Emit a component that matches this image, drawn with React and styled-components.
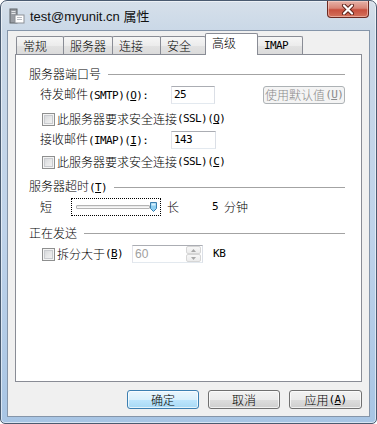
import React from 'react';
import styled, { createGlobalStyle } from 'styled-components';

const GlobalStyle = createGlobalStyle`
  html, body { margin: 0; padding: 0; background: #ffffff; }
  body {
    font-family: "Noto Sans CJK SC", sans-serif;
    font-size: 12px;
    font-weight: 300;
    color: #000;
  }
`;

const Window = styled.div`
  box-sizing: border-box;
  width: 377px;
  height: 424px;
  display: flex;
  flex-direction: column;
  padding: 0 6px 6px;
  border: 1px solid #4a5b70;
  border-radius: 7px 7px 5px 5px;
  background: linear-gradient(180deg, #d6e0ea 0, #cad8e7 30px, #bfd3ea 55%, #a8c5e4 100%);
  box-shadow: inset 0 0 0 1px rgba(255, 255, 255, 0.55);
`;

const TitleBar = styled.div`
  height: 29px;
  display: flex;
  align-items: center;
`;

const TitleIcon = styled.svg`
  width: 16px;
  height: 16px;
  margin-left: 2px;
  flex: none;
`;

const TitleText = styled.div`
  margin-left: 5px;
  font-family: "Liberation Sans", "Noto Sans CJK SC", sans-serif;
  font-size: 13px;
  font-weight: 400;
  color: #111;
  white-space: nowrap;
`;

const CloseButton = styled.div`
  align-self: flex-start;
  margin-left: auto;
  margin-right: 1px;
  width: 42px;
  height: 17px;
  box-sizing: border-box;
  border: 1px solid #6b2a22;
  border-top: none;
  border-radius: 0 0 4px 4px;
  background: linear-gradient(180deg, #e6b2a8 0%, #d98677 45%, #c8503e 55%, #d4725c 100%);
  box-shadow: inset 0 0 0 1px rgba(255, 220, 210, 0.5);
  display: flex;
  align-items: center;
  justify-content: center;
`;

const Client = styled.div`
  flex: 1;
  display: flex;
  flex-direction: column;
  border: 1px solid #8595a9;
  background: #f0f0f0;
  padding: 0 7px 7px;
`;

const TabRow = styled.div`
  height: 23px;
  display: flex;
  align-items: flex-end;
  padding-left: 2px;
`;

const Tab = styled.div`
  box-sizing: border-box;
  width: ${p => p.w}px;
  height: ${p => (p.active ? 22 : 18)}px;
  margin-left: -1px;
  margin-bottom: ${p => (p.active ? -1 : 0)}px;
  padding: 0 0 ${p => (p.active ? 3 : 0)}px 6px;
  position: relative;
  z-index: ${p => (p.active ? 1 : 0)};
  border: 1px solid #898c95;
  border-bottom: none;
  border-radius: 2px 2px 0 0;
  background: ${p => (p.active ? '#ffffff' : 'linear-gradient(180deg, #f6f6f6 0%, #ececec 50%, #e2e2e2 51%, #dbdbdb 100%)')};
  display: flex;
  align-items: center;
  line-height: 14px;
`;

const Panel = styled.div`
  box-sizing: border-box;
  height: 328px;
  border: 1px solid #898c95;
  background: #ffffff;
  padding: 0 16px 0 13px;
  display: flex;
  flex-direction: column;
`;

const Ascii = styled.span`
  font-family: "DejaVu Sans Mono", monospace;
  font-weight: 400;
  font-size: 11px;
  letter-spacing: -0.6px;
`;

const Heading = styled.div`
  height: 16px;
  margin-top: ${p => p.mt}px;
  display: flex;
  align-items: center;
  gap: 7px;
  line-height: 16px;
  white-space: nowrap;
  &::after {
    content: '';
    flex: 1;
    border-top: 1px solid #a3a3a3;
  }
`;

const Row = styled.div`
  height: ${p => p.h}px;
  margin-top: ${p => p.mt}px;
  padding-left: ${p => p.indent}px;
  display: flex;
  align-items: center;
  white-space: nowrap;
  line-height: 14px;
`;

const FieldLabel = styled.span`
  width: ${p => p.w}px;
  flex: none;
`;

const TextBox = styled.div`
  box-sizing: border-box;
  width: ${p => p.w}px;
  height: 18px;
  padding-left: 2px;
  border: 1px solid;
  border-color: #abadb3 #dbdfe6 #e3e9ef #e2e3ea;
  background: #fff;
  display: flex;
  align-items: center;
  margin-left: ${p => p.ml || 0}px;
  color: ${p => (p.disabled ? '#a0a0a0' : '#000')};
`;

const SpinText = styled.span`
  flex: 1;
  font-family: "Liberation Sans", sans-serif;
  font-weight: 400;
  font-size: 12px;
`;

const SpinButtons = styled.div`
  width: 15px;
  height: 16px;
  margin-right: 1px;
  display: flex;
  flex-direction: column;
`;

const SpinHalf = styled.div`
  flex: 1;
  box-sizing: border-box;
  border: 1px solid #d6d6d6;
  border-radius: 2px;
  background: linear-gradient(180deg, #f7f7f7, #ececec);
  display: flex;
  align-items: center;
  justify-content: center;
`;

const DefaultsButton = styled.div`
  box-sizing: border-box;
  width: 83px;
  height: 18px;
  margin-left: 48px;
  border: 1px solid #adb2b5;
  border-radius: 3px;
  background: #f4f4f4;
  color: #8a8a8a;
  display: flex;
  align-items: center;
  justify-content: center;
`;

const CheckBox = styled.span`
  box-sizing: border-box;
  width: 13px;
  height: 13px;
  flex: none;
  margin-right: 2px;
  border: 1px solid #8e8f8f;
  background: linear-gradient(135deg, #cfd1d4 0%, #e6e7e8 50%, #f6f6f6 100%);
  box-shadow: inset 0 0 0 1px #f4f4f4, inset 0 0 0 2px #c9cbcf;
`;

const SliderBox = styled.div`
  box-sizing: border-box;
  width: 90px;
  height: 18px;
  margin-left: 19px;
  border: 1px dotted #000;
  display: flex;
  align-items: center;
  padding-left: 4px;
`;

const Track = styled.div`
  box-sizing: border-box;
  width: 74px;
  height: 4px;
  border: 1px solid #b4b4b4;
  border-radius: 1px;
  background: linear-gradient(180deg, #e2e2e2, #ffffff);
`;

const Thumb = styled.svg`
  width: 7px;
  height: 10px;
  flex: none;
`;

const Gap = styled.span`
  display: inline-block;
  width: ${p => p.w}px;
  flex: none;
`;

const ButtonRow = styled.div`
  margin-top: 8px;
  display: flex;
  justify-content: flex-end;
  gap: 9px;
`;

const DialogButton = styled.div`
  box-sizing: border-box;
  width: ${p => p.w}px;
  height: 19px;
  border: 1px solid ${p => (p.primary ? '#3c7fb1' : '#707070')};
  border-radius: 3px;
  background: ${p =>
    p.primary
      ? 'linear-gradient(180deg, #eaf6fd 0%, #d9f0fc 50%, #bee6fd 51%, #a7d9f5 100%)'
      : 'linear-gradient(180deg, #f2f2f2 0%, #ebebeb 50%, #dddddd 51%, #cfcfcf 100%)'};
  box-shadow: inset 0 0 0 1px rgba(255, 255, 255, 0.7);
  display: flex;
  align-items: center;
  justify-content: center;
  line-height: 14px;
`;

const tabs = [
  { key: 'general', label: '常规', w: 48 },
  { key: 'servers', label: '服务器', w: 50 },
  { key: 'connect', label: '连接', w: 49 },
  { key: 'security', label: '安全', w: 46 },
  { key: 'advanced', label: '高级', w: 53, active: true },
  { key: 'imap', label: <Ascii>IMAP</Ascii>, w: 46 },
];

function Arrow({ up }) {
  return (
    <svg width="5" height="3" viewBox="0 0 5 3">
      <path d={up ? 'M0 3 L2.5 0 L5 3 Z' : 'M0 0 L2.5 3 L5 0 Z'} fill="#a8a8a8" />
    </svg>
  );
}

export default function App() {
  return (
    <>
      <GlobalStyle />
      <Window>
        <TitleBar>
          <TitleIcon viewBox="0 0 16 16">
            <rect x="1" y="1" width="7" height="14" fill="#9a9ea4" stroke="#5f6469" strokeWidth="1" />
            <rect x="2.5" y="3" width="4" height="1" fill="#e4e6e8" />
            <rect x="2.5" y="5" width="4" height="1" fill="#e4e6e8" />
            <rect x="6" y="7" width="9" height="8" fill="#ffffff" stroke="#8b8f95" strokeWidth="1" />
            <rect x="8" y="9" width="5" height="1" fill="#b8bcc2" />
            <rect x="8" y="11" width="5" height="1" fill="#b8bcc2" />
          </TitleIcon>
          <TitleText>test@myunit.cn 属性</TitleText>
          <CloseButton>
            <svg width="14" height="11" viewBox="0 0 14 11">
              <path d="M3 1.5 L11 9.5 M11 1.5 L3 9.5" stroke="#5b2018" strokeWidth="4" strokeLinecap="round" />
              <path d="M3 1.5 L11 9.5 M11 1.5 L3 9.5" stroke="#ffffff" strokeWidth="2.2" strokeLinecap="round" />
            </svg>
          </CloseButton>
        </TitleBar>
        <Client>
          <TabRow>
            {tabs.map(t => (
              <Tab key={t.key} w={t.w} active={t.active}>
                {t.label}
              </Tab>
            ))}
          </TabRow>
          <Panel>
            <Heading mt={11}>服务器端口号</Heading>
            <Row h={18} mt={4} indent={11}>
              <FieldLabel w={131}>
                待发邮件<Ascii>(SMTP)(<u>O</u>):</Ascii>
              </FieldLabel>
              <TextBox w={45}>
                <Ascii>25</Ascii>
              </TextBox>
              <DefaultsButton>
                使用默认值<Ascii>(<u>U</u>)</Ascii>
              </DefaultsButton>
            </Row>
            <Row h={14} mt={8} indent={13}>
              <CheckBox />
              此服务器要求安全连接<Ascii>(SSL)(<u>Q</u>)</Ascii>
            </Row>
            <Row h={18} mt={5} indent={11}>
              <FieldLabel w={131}>
                接收邮件<Ascii>(IMAP)(<u>I</u>):</Ascii>
              </FieldLabel>
              <TextBox w={45}>
                <Ascii>143</Ascii>
              </TextBox>
            </Row>
            <Row h={14} mt={6} indent={13}>
              <CheckBox />
              此服务器要求安全连接<Ascii>(SSL)(<u>C</u>)</Ascii>
            </Row>

            <Heading mt={10}>
              <span>
                服务器超时<Ascii>(<u>T</u>)</Ascii>
              </span>
            </Heading>
            <Row h={18} mt={3} indent={11}>
              短
              <SliderBox>
                <Track />
                <Thumb viewBox="0 0 7 10">
                  <path
                    d="M0.5 0.5 H6.5 V6.5 L3.5 9.5 L0.5 6.5 Z"
                    fill="#8fd0f2"
                    stroke="#3b7fae"
                    strokeWidth="1"
                  />
                  <path d="M1.5 1.5 H5.5 V3.5 H1.5 Z" fill="#d8f0fc" />
                </Thumb>
              </SliderBox>
              <Gap w={6} />
              长
              <Gap w={33} />
              <Ascii>5</Ascii>
              <Gap w={6} />
              分钟
            </Row>

            <Heading mt={9}>正在发送</Heading>
            <Row h={18} mt={4} indent={13}>
              <CheckBox />
              拆分大于<Ascii>(<u>B</u>)</Ascii>
              <TextBox w={71} ml={9} disabled>
                <SpinText>60</SpinText>
                <SpinButtons>
                  <SpinHalf>
                    <Arrow up />
                  </SpinHalf>
                  <SpinHalf>
                    <Arrow />
                  </SpinHalf>
                </SpinButtons>
              </TextBox>
              <Gap w={10} />
              <Ascii>KB</Ascii>
            </Row>
          </Panel>
          <ButtonRow>
            <DialogButton w={72} primary>
              确定
            </DialogButton>
            <DialogButton w={72}>取消</DialogButton>
            <DialogButton w={73}>
              应用<Ascii>(<u>A</u>)</Ascii>
            </DialogButton>
          </ButtonRow>
        </Client>
      </Window>
    </>
  );
}
